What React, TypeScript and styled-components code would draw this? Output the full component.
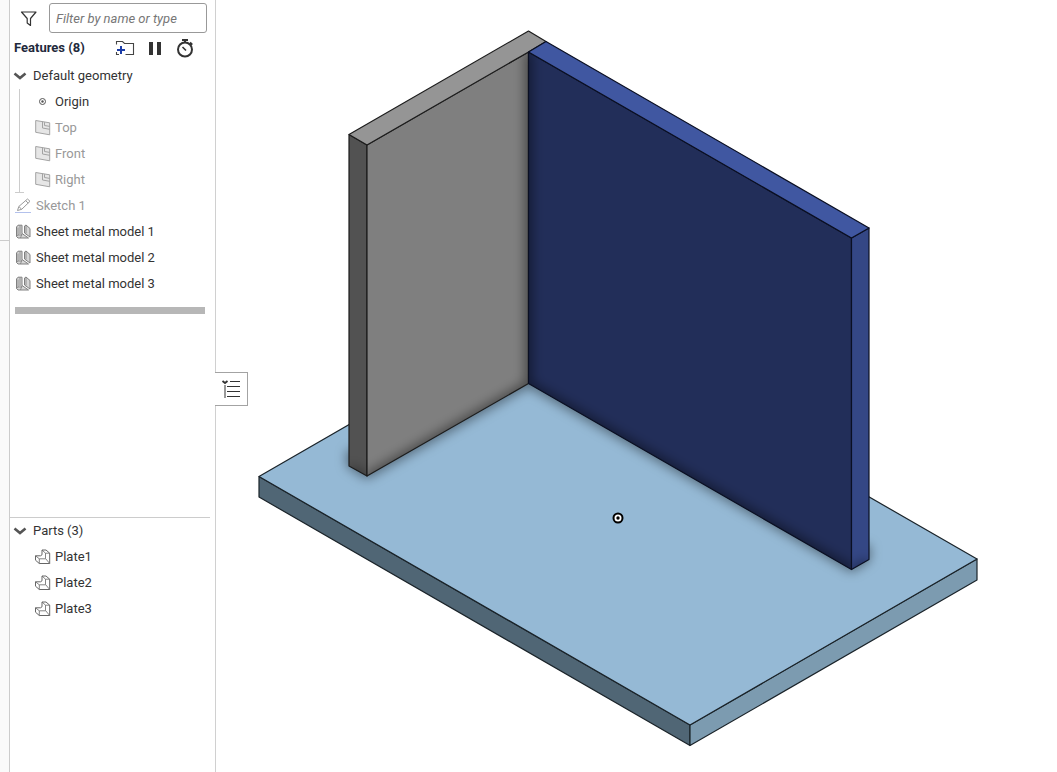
import React, { useState } from "react";
import styled, { createGlobalStyle } from "styled-components";

const GlobalStyle = createGlobalStyle`
  *, *::before, *::after { box-sizing: border-box; }
  body {
    margin: 0;
    background: #fff;
    color: #333;
    font: 13px/26px Roboto, "Liberation Sans", sans-serif;
  }
  svg { display: block; flex: none; }
`;

const Workspace = styled.div`
  display: flex;
  height: 100vh;
`;

const Rail = styled.aside`
  display: flex;
  flex-direction: column;
  flex: none;
  width: 10px;
  background: #fafafa;
  border-right: 1px solid #ccc;
`;

const RailSlot = styled.div`
  height: 241px;
  border-bottom: 1px solid #ccc;
`;

const Sidebar = styled.nav`
  display: flex;
  flex-direction: column;
  flex: none;
  width: 206px;
  border-right: 1px solid #d0d0d0;
`;

const FeaturePane = styled.section`
  flex: 1;
  min-height: 0;
  overflow: hidden;
`;

const PartsPane = styled.section`
  flex: none;
  height: 255px;
  margin-right: 5px;
  border-top: 1px solid #ccc;
`;

const FilterBar = styled.div`
  display: flex;
  align-items: center;
  gap: 10px;
  padding: 3px 8px 0 9px;
`;

const IconButton = styled.button`
  display: grid;
  place-items: center;
  flex: none;
  width: 20px;
  height: 20px;
  padding: 0;
  border: 0;
  background: none;
  color: inherit;
  cursor: pointer;
`;

const FilterInput = styled.input`
  flex: 1;
  min-width: 0;
  height: 30px;
  padding: 0 6px;
  border: 1px solid #999;
  border-radius: 3px;
  background: #fff;
  color: #333;
  font: italic 13px/20px Roboto, "Liberation Sans", sans-serif;
  &::placeholder { color: #777; opacity: 1; }
`;

const HeaderRow = styled.header`
  display: flex;
  align-items: center;
  height: 30px;
  padding: 0 20px 0 4px;
`;

const Heading = styled.h2`
  flex: 1;
  margin: 0;
  color: #1f2a3c;
  font-size: 13px;
  font-weight: 700;
`;

const Tools = styled.div`
  display: flex;
  gap: 10px;
`;

const Tree = styled.ul`
  margin: 0;
  padding: 0;
  list-style: none;
`;

const Branch = styled(Tree)<{ $guide?: boolean }>`
  position: relative;
  padding-left: 25px;
  ${(p) =>
    p.$guide &&
    `
    &::before {
      content: "";
      position: absolute;
      left: 9px;
      top: 0;
      bottom: 0;
      border-left: 1px solid #ccc;
    }
    &::after {
      content: "";
      position: absolute;
      left: 5px;
      bottom: 0;
      width: 9px;
      border-bottom: 1px solid #ccc;
    }
  `}
`;

const Row = styled.div<{ $muted?: boolean; $nested?: boolean }>`
  display: flex;
  align-items: center;
  gap: ${(p) => (p.$nested ? 4 : 5)}px;
  height: 26px;
  padding-left: ${(p) => (p.$nested ? 0 : 5)}px;
  color: ${(p) => (p.$muted ? "#999" : "#333")};
  white-space: nowrap;
`;

const GroupToggle = styled.button`
  display: flex;
  align-items: center;
  gap: 6px;
  height: 26px;
  padding: 0 0 0 3px;
  border: 0;
  background: none;
  color: #333;
  font: inherit;
  cursor: pointer;
`;

const RollbackBar = styled.div`
  height: 7px;
  margin: 10px 10px 0 5px;
  background: #b7b7b7;
`;

const Viewport = styled.main`
  position: relative;
  flex: 1;
  min-width: 0;
`;

const PanelToggle = styled.button`
  position: absolute;
  top: 372px;
  left: -1px;
  display: grid;
  place-items: center;
  width: 33px;
  height: 34px;
  padding: 0;
  border: 1px solid #a3a3a3;
  border-left: 0;
  background: #fff;
  cursor: pointer;
`;

const Scene = styled.svg`
  width: 100%;
  height: 100%;
`;

const FilterIcon = () => (
  <svg width="18" height="18" fill="none" stroke="#333" strokeWidth="1.2" strokeLinejoin="round">
    <path d="M1.500 3h14.500l-5.500 6.500v7L7.200 14V9.500z" />
  </svg>
);

const AddFolderIcon = () => (
  <svg width="20" height="18" fill="none">
    <path d="M1.500 5.500V2.500h6l2 2h9v11h-8M1.500 13v2.500H4" stroke="#444" strokeWidth="1.1" />
    <path d="M6 7v8M2 11h8" stroke="#1c3da8" strokeWidth="2" />
  </svg>
);

const PauseIcon = () => (
  <svg width="18" height="18" fill="#333">
    <rect x="3" y="3" width="4" height="13" />
    <rect x="11" y="3" width="4" height="13" />
  </svg>
);

const StopwatchIcon = () => (
  <svg width="20" height="20" fill="none" stroke="#333" strokeWidth="2">
    <circle cx="10" cy="11.500" r="7" />
    <path d="M7 2h6M10 2v3M15 4.500l2.200 2.200" />
    <path d="M7.500 9l3.500 3.500" strokeWidth="1.600" />
  </svg>
);

const ChevronIcon = () => (
  <svg width="14" height="14" fill="none" stroke="#555" strokeWidth="2.600">
    <path d="M1.500 4.500L7 9l5.500-4.500" />
  </svg>
);

const OriginIcon = () => (
  <svg width="16" height="16" fill="none" stroke="#555">
    <circle cx="7.500" cy="7.500" r="3" />
    <circle cx="7.500" cy="7.500" r="1.200" fill="#555" stroke="none" />
  </svg>
);

const PlaneIcon = () => (
  <svg width="16" height="16" fill="#e6e6e6" stroke="#a3a3a3">
    <path d="M.700.500l14 2.300v12L.700 12.300z" />
    <path d="M7.500 1.700v6.300l7.200 1.300M9.500 2.200v3.300l5.200.900" fill="none" />
  </svg>
);

const SketchIcon = () => (
  <svg width="16" height="16" fill="none" stroke="#999" strokeLinejoin="round">
    <path d="M2.500 12.500l1.300-4L12.500 1l2.500 2.300-8.300 8zM3.800 8.500l2.900 2.800M10.700 2.700l2.500 2.400" />
    <path d="M0 14.500h16" stroke="#b3c1ec" />
  </svg>
);

const SheetMetalIcon = () => (
  <svg width="16" height="16" fill="#d6d6d6" stroke="#808080" strokeLinejoin="round">
    <path d="M1.500 3l1.500-1.800h4v8.300l6.500 4.500H3L1.500 12.500z" />
    <path d="M9.500 2L11 1l4 3.500V13L9.500 9z" />
    <path d="M3 3.500v7.500h4M5 1.500V10M3 11l-1.300 1.500M7 9.500L5.500 14M11 1v8.500" fill="none" strokeWidth=".8" />
  </svg>
);

const PartIcon = () => (
  <svg width="16" height="16" fill="#fff" stroke="#666" strokeLinejoin="round">
    <path d="M7 1h4l3.700 3.200v10.300H4.300L.500 11.200V6.800h5l1.500-1z" />
    <path d="M7 1l3.500 3.200h4.200M10.500 4.200v5.300l4.200 5M.500 6.800l3.800 3h6.200M4.300 9.800v4.700" fill="none" strokeWidth=".8" />
  </svg>
);

const ListIcon = () => (
  <svg width="20" height="20" fill="none" stroke="#333">
    <path d="M9 2.500h10M6 7.500h13M6 12.500h13M6 17.500h13" />
    <path d="M1.500 2l2.500 2L6.500 2" strokeWidth="1.800" />
    <path d="M4 6v13" stroke="#999" strokeWidth="2" />
  </svg>
);

const faces = {
  floorTop: "259,476.5 546,311 977,559 690,725",
  floorLeft: "259,476.5 690,725 690,745.5 259,497",
  floorRight: "690,725 977,559 977,580 690,745.5",
  greyTop: "349,134.5 528.500,31 546,41.500 528.500,52 367,145",
  greyLeft: "349,134.5 367,145 367,476 349,466",
  greyFront: "367,145 528.500,52 528.500,383.500 367,476",
  blueTop: "528.500,52 546,41.500 869,228 851.500,238",
  blueFront: "528.500,52 851.500,238 851.500,569.500 528.500,383.500",
  blueSide: "851.500,238 869,228 869,559.500 851.500,569.500",
};

type FaceProps = { name: keyof typeof faces; fill: string; edge: string; shade?: string; depth?: number };

/* One flat face, with optional contact shading along some of its edges. */
const Face = ({ name, fill, edge, shade, depth = 0.45 }: FaceProps) => (
  <g>
    <polygon points={faces[name]} fill={fill} />
    {shade && (
      <>
        <clipPath id={name}>
          <polygon points={faces[name]} />
        </clipPath>
        <g clipPath={`url(#${name})`}>
          <path d={shade} fill="none" stroke="#000" strokeOpacity={depth} strokeWidth="12" filter="url(#soften)" />
        </g>
      </>
    )}
    <polygon points={faces[name]} fill="none" stroke={edge} strokeWidth="1.2" strokeLinejoin="round" />
  </g>
);

const Model = () => (
  <Scene viewBox="216 0 841 772" role="img" aria-label="Three plates model">
    <defs>
      <filter id="soften" filterUnits="userSpaceOnUse" x="216" y="0" width="841" height="772">
        <feGaussianBlur stdDeviation="6" />
      </filter>
    </defs>
    <Face name="floorLeft" fill="#506675" edge="#1a2329" />
    <Face name="floorRight" fill="#7c9bb0" edge="#1a2329" />
    <Face
      name="floorTop"
      fill="#95b9d5"
      edge="#1a2329"
      shade="M353 450V463L367 472L528.500 380L851.500 565L864 557V545"
    />
    <Face name="greyLeft" fill="#525252" edge="#1c1c1c" shade="M349 470L367 480" depth={0.35} />
    <Face name="greyFront" fill="#7f7f7f" edge="#1c1c1c" shade="M531 52V386L367 480" />
    <Face name="greyTop" fill="#959595" edge="#1c1c1c" />
    <Face name="blueFront" fill="#222e59" edge="#0a0f22" shade="M526 52V386L851.500 573" />
    <Face name="blueSide" fill="#344785" edge="#0a0f22" shade="M851.500 573L869 563" depth={0.35} />
    <Face name="blueTop" fill="#4057a1" edge="#0a0f22" />
    <circle cx="618" cy="518" r="4.500" fill="#fff" stroke="#000" strokeWidth="2" />
    <circle cx="618" cy="518" r="1.700" />
  </Scene>
);

const planes = ["Top", "Front", "Right"];
const models = ["Sheet metal model 1", "Sheet metal model 2", "Sheet metal model 3"];
const parts = ["Plate1", "Plate2", "Plate3"];

export default function App() {
  const [panelOpen, setPanelOpen] = useState(true);
  const [geometryOpen, setGeometryOpen] = useState(true);
  const [partsOpen, setPartsOpen] = useState(true);

  return (
    <Workspace>
      <GlobalStyle />
      <Rail>
        <RailSlot />
      </Rail>
      {panelOpen && (
        <Sidebar>
          <FeaturePane>
            <FilterBar>
              <IconButton aria-label="Filter">
                <FilterIcon />
              </IconButton>
              <FilterInput aria-label="Filter features" placeholder="Filter by name or type" />
            </FilterBar>
            <HeaderRow>
              <Heading>Features (8)</Heading>
              <Tools>
                <IconButton aria-label="Add folder">
                  <AddFolderIcon />
                </IconButton>
                <IconButton aria-label="Pause regeneration">
                  <PauseIcon />
                </IconButton>
                <IconButton aria-label="Regeneration times">
                  <StopwatchIcon />
                </IconButton>
              </Tools>
            </HeaderRow>
            <Tree>
              <li>
                <GroupToggle aria-expanded={geometryOpen} onClick={() => setGeometryOpen(!geometryOpen)}>
                  <ChevronIcon />
                  Default geometry
                </GroupToggle>
                {geometryOpen && (
                  <Branch $guide>
                    <li>
                      <Row $nested>
                        <OriginIcon />
                        Origin
                      </Row>
                    </li>
                    {planes.map((name) => (
                      <li key={name}>
                        <Row $nested $muted>
                          <PlaneIcon />
                          {name}
                        </Row>
                      </li>
                    ))}
                  </Branch>
                )}
              </li>
              <li>
                <Row $muted>
                  <SketchIcon />
                  Sketch 1
                </Row>
              </li>
              {models.map((name) => (
                <li key={name}>
                  <Row>
                    <SheetMetalIcon />
                    {name}
                  </Row>
                </li>
              ))}
            </Tree>
            <RollbackBar />
          </FeaturePane>
          <PartsPane>
            <GroupToggle aria-expanded={partsOpen} onClick={() => setPartsOpen(!partsOpen)}>
              <ChevronIcon />
              Parts (3)
            </GroupToggle>
            {partsOpen && (
              <Branch>
                {parts.map((name) => (
                  <li key={name}>
                    <Row $nested>
                      <PartIcon />
                      {name}
                    </Row>
                  </li>
                ))}
              </Branch>
            )}
          </PartsPane>
        </Sidebar>
      )}
      <Viewport>
        <Model />
        <PanelToggle aria-label="Toggle feature list" onClick={() => setPanelOpen(!panelOpen)}>
          <ListIcon />
        </PanelToggle>
      </Viewport>
    </Workspace>
  );
}
